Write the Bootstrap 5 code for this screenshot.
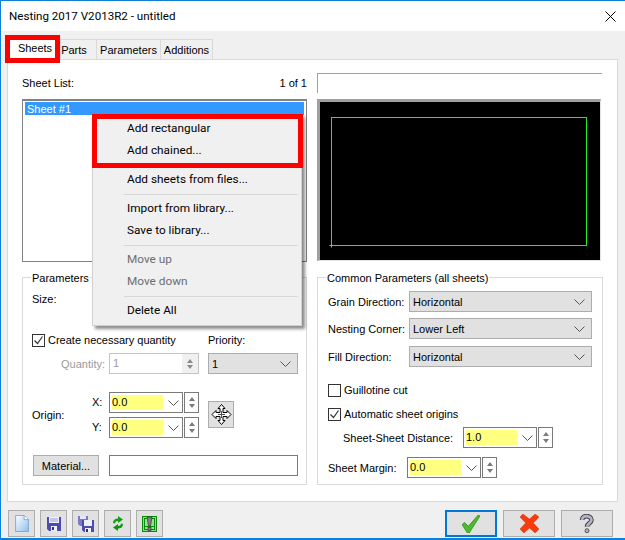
<!DOCTYPE html>
<html lang="en">
<head>
    <meta charset="UTF-8">
    <title>Nesting 2017 V2013R2 - untitled</title>
    <link href="https://cdn.jsdelivr.net/npm/bootstrap@5.3.3/dist/css/bootstrap.min.css" rel="stylesheet">
    <style>
        html, body { margin: 0; background: #fff; overflow: hidden; }
        body { font-family: "Liberation Sans", Arial, sans-serif; font-size: 11px; line-height: 16px; color: #000; }

        .dlg { position: relative; width: 625px; height: 540px; background: #f0f0f0; border-top: 1px solid #0f80d8; border-left: 1px solid #0f80d8; border-bottom: 2px solid #0f80d8; }
        .dlg-title { height: 30px; background: #fff; padding-left: 8px; font-family: Roboto, sans-serif; font-size: 11.600px; }
        .dlg-close { margin-right: 9px; line-height: 0; }

        .tabs-row { height: 28px; padding: 7px 0 0 7px; border: 0; flex-wrap: nowrap; align-items: flex-end; }
        .tabs-row .nav-link { height: 20px; padding: 2px 0 0; border: 1px solid #d9d9d9; border-bottom: 0; margin: 0 0 0 -1px; border-radius: 0; background: #f0f0f0; color: #000; text-align: center; }
        .tab-sheets { width: 52px; margin-left: 1px !important; }
        .tab-sheets.active { height: 24px; background: #fff; border-color: #fff; padding-top: 4px; }
        .tab-parts { width: 37px; padding-right: 9px !important; }
        .tab-params { width: 65px; }
        .tab-adds { width: 53px; }
        .red-tab { position: absolute; left: 4px; top: 4px; width: 55px; height: 28px; border: 5px solid #f00; pointer-events: none; z-index: 3; }

        .main-panel { width: 611px; height: 443px; margin-left: 6px; background: #fff; border: 1px solid #d9d9d9; padding: 13px 14px 0; display: grid; grid-template-columns: 285px 286px; column-gap: 10px; grid-template-rows: 20px 169px 208px; }
        .list-head { height: 20px; }
        .name-field { width: 285px; height: 20px; border-top: 1px solid #a0a0a0; border-left: 1px solid #a0a0a0; }
        .sheet-list { margin-top: 6px; height: 163px; border: 1px solid #828282; border-top-width: 2px; padding: 1px 2px; background: #fff; }
        .sheet-sel { height: 13px; line-height: 14px; background: #39f; color: #fff; padding-left: 2px; }
        .preview { margin-top: 6px; width: 284px; height: 162px; background: #000; border-top: 3px solid #a0a0a0; border-left: 3px solid #a0a0a0; border-right: 1px solid #e3e3e3; border-bottom: 1px solid #e3e3e3; line-height: 0; }

        .group-box { position: relative; margin-top: 15px; height: 208px; border: 1px solid #d9d9d9; }
        .group-name { position: absolute; top: -8px; left: 8px; padding: 0 1px; background: #fff; white-space: nowrap; }

        .ctl-select.form-select { height: 21px; min-height: 0; padding: 0 0 0 3px; font-size: 11px; line-height: 18px; color: #000; background-color: #e1e1e1; background-image: url("data:image/svg+xml,%3csvg xmlns='http://www.w3.org/2000/svg' viewBox='0 0 11 6'%3e%3cpath d='M.5.5l5 5 5-5' fill='none' stroke='%23555'/%3e%3c/svg%3e"); background-position: right 6px center; background-size: 11px 6px; border: 1px solid #adadad; border-radius: 0; box-shadow: none; }
        .ctl-box { height: 21px; border: 1px solid #7a7a7a; background: #fff; }
        .combo-main { width: 74px; height: 21px; border: 1px solid #7a7a7a; background: #fff; padding: 2px; align-items: stretch; }
        .combo-val { width: 51px; height: 15px; line-height: 15px; background: #ffff80; }
        .combo-chev { margin-left: 5px; align-self: center; line-height: 0; }
        .spin-box { width: 15px; height: 21px; border: 1px solid #7a7a7a; background: #fff; margin-left: 1px; gap: 3px; }
        .spin-up { width: 0; height: 0; border: 3px solid transparent; border-top: 0; border-bottom: 4px solid #7a7a7a; }
        .spin-dn { width: 0; height: 0; border: 3px solid transparent; border-bottom: 0; border-top: 4px solid #7a7a7a; }

        .ctl-check.form-check-input { width: 13px; height: 13px; margin: 0 3px 0 0; border: 1px solid #333; border-radius: 0; background-color: #fff; box-shadow: none; opacity: 1; flex: none; }
        .ctl-check.form-check-input:checked { background-color: #fff; border-color: #333; background-size: 11px 11px; background-image: url("data:image/svg+xml,%3csvg xmlns='http://www.w3.org/2000/svg' viewBox='0 0 11 11'%3e%3cpath d='M1.5 5.5l3 3 5-7' fill='none' stroke='%23333' stroke-width='1.2'/%3e%3c/svg%3e"); }

        .left-body { padding: 13px 8px 0 9px; }
        .row-size { height: 16px; }
        .row-create { margin-top: 25px; height: 16px; }
        .row-qty { margin-top: 5px; height: 21px; }
        .lbl-off { color: #9a9a9a; }
        .qty-label { width: 77px; text-align: right; padding-right: 4px; }
        .qty-box { width: 90px; height: 21px; border: 1px solid #c4c4c4; padding-left: 3px; color: #9a9a9a; line-height: 19px; }
        .qty-spin { width: 16px; background: #f0f0f0; height: 100%; gap: 2px; }
        .qty-spin .spin-up { border-bottom-color: #8a8a8a; }
        .qty-spin .spin-dn { border-top-color: #8a8a8a; }
        .col-prio { width: 90px; }
        .row-qty .col-prio { margin-left: 9px; }
        .row-origin { margin-top: 18px; height: 46px; }
        .origin-label { width: 60px; padding-top: 15px; }
        .origin-axes { width: 17px; }
        .axis-row { height: 21px; line-height: 20px; }
        .axis-row + .axis-row { margin-top: 4px; }
        .pan-btn { width: 26px; height: 27px; padding: 0; margin: 9px 0 0 9px; background: #e1e1e1; border: 1px solid #adadad; border-radius: 0; line-height: 0; }
        .row-mat { margin-top: 17px; height: 21px; padding-left: 1px; }
        .mat-btn { width: 66px; height: 21px; padding: 0; font-size: 11px; line-height: 18px; color: #000; background: #e1e1e1; border: 1px solid #adadad; border-radius: 0; margin-right: 10px; }
        .mat-box { width: 189px; height: 21px; }

        .right-body { padding: 13px 10px 0 10px; }
        .row-opt { height: 21px; }
        .row-opt + .row-opt { margin-top: 6px; }
        .row-opt + .row-opt + .row-opt { margin-top: 7px; }
        .opt-label { width: 81px; white-space: nowrap; }
        .opt-select { width: 183px; }
        .row-guil { margin-top: 15px; height: 16px; }
        .row-auto { margin-top: 8px; height: 16px; }
        .row-dist { margin-top: 5px; padding-left: 15px; height: 21px; }
        .dist-label { width: 120px; }
        .row-margin { margin-top: 9px; height: 21px; }
        .margin-label { width: 79px; }

        .foot { padding: 8px 12px 0 7px; }
        .tool-row { column-gap: 5px; }
        .act-row { column-gap: 6px; }
        .tool-btn { width: 27px; height: 27px; padding: 0; background: #e1e1e1; border: 1px solid #adadad; border-radius: 0; line-height: 0; }
        .act-btn { width: 52px; height: 27px; padding: 0; background: #e1e1e1; border: 1px solid #adadad; border-radius: 0; line-height: 0; }
        .act-btn.is-default { border: 2px solid #0078d7; }

        .ctx-menu.dropdown-menu { top: 113px; left: 91px; width: 210px; min-width: 0; padding: 3px 2px; background: #f0f0f0; border: 1px solid #d0d0d0; border-radius: 0; box-shadow: 3px 3px 3px rgba(0,0,0,.45); z-index: 5; }
        .ctx-menu .dropdown-item { height: 22px; line-height: 21px; padding: 0 0 0 32px; color: #000; font-family: Roboto, sans-serif; font-size: 11.800px; }
        .ctx-menu .dropdown-item.disabled { color: #6d6d6d; }
        .ctx-menu .dropdown-divider { height: 1px; margin: 3px 1px 3px 29px; border-top: 1px solid #d7d7d7; opacity: 1; }
        .red-menu { position: absolute; top: 113px; left: 91px; width: 211px; height: 54px; border: 5px solid #f00; z-index: 6; pointer-events: none; }
    </style>
</head>
<body>
<div class="dlg">
    <div class="dlg-title d-flex align-items-center justify-content-between">
        <span>Nesting 2017 V2013R2 - untitled</span>
        <span class="dlg-close"><svg width="11" height="11" viewBox="0 0 11 11"><path d="M.5.500l10 10M10.500.500l-10 10" stroke="#000" fill="none"/></svg></span>
    </div>

    <ul class="nav nav-tabs tabs-row position-relative">
        <li class="nav-item"><a class="nav-link active tab-sheets" href="#">Sheets</a></li>
        <li class="nav-item"><a class="nav-link tab-parts" href="#">Parts</a></li>
        <li class="nav-item"><a class="nav-link tab-params" href="#">Parameters</a></li>
        <li class="nav-item"><a class="nav-link tab-adds" href="#">Additions</a></li>
        <li class="red-tab"></li>
    </ul>

    <div class="main-panel">
        <div class="list-head d-flex justify-content-between align-items-center">
            <span>Sheet List:</span><span>1 of 1</span>
        </div>
        <div class="name-field"></div>

        <div class="sheet-list"><div class="sheet-sel">Sheet #1</div></div>
        <div class="preview">
            <svg width="280" height="158" viewBox="0 0 280 158">
                <rect x="11.500" y="15.500" width="255" height="128" fill="none" stroke="#22ee22"/>
                <path d="M9.500 143.500h4M11.500 141.500v4" stroke="#22ddff" fill="none"/>
            </svg>
        </div>

        <div class="group-box">
            <span class="group-name">Parameters</span>
            <div class="left-body">
                <div class="row-size">Size:</div>
                <div class="row-create d-flex justify-content-between">
                    <label class="d-flex align-items-center"><input class="form-check-input ctl-check" type="checkbox" checked>Create necessary quantity</label>
                    <span class="col-prio">Priority:</span>
                </div>
                <div class="row-qty d-flex align-items-center">
                    <span class="qty-label lbl-off">Quantity:</span>
                    <div class="qty-box d-flex justify-content-between"><span>1</span>
                        <span class="qty-spin d-flex flex-column align-items-center justify-content-center"><i class="spin-up"></i><i class="spin-dn"></i></span>
                    </div>
                    <select class="form-select ctl-select col-prio"><option>1</option></select>
                </div>
                <div class="row-origin d-flex">
                    <div class="origin-label">Origin:</div>
                    <div>
                        <div class="axis-row d-flex">
                            <span class="origin-axes">X:</span>
                            <div class="combo-main d-flex"><span class="combo-val">0.0</span><span class="combo-chev"><svg width="11" height="6" viewBox="0 0 11 6"><path d="M.5.500l5 5 5-5" fill="none" stroke="#555"/></svg></span></div>
                            <div class="spin-box d-flex flex-column align-items-center justify-content-center"><i class="spin-up"></i><i class="spin-dn"></i></div>
                        </div>
                        <div class="axis-row d-flex">
                            <span class="origin-axes">Y:</span>
                            <div class="combo-main d-flex"><span class="combo-val">0.0</span><span class="combo-chev"><svg width="11" height="6" viewBox="0 0 11 6"><path d="M.5.500l5 5 5-5" fill="none" stroke="#555"/></svg></span></div>
                            <div class="spin-box d-flex flex-column align-items-center justify-content-center"><i class="spin-up"></i><i class="spin-dn"></i></div>
                        </div>
                    </div>
                    <button class="btn pan-btn" type="button">
                        <svg width="21" height="21" viewBox="0 0 21 21"><path d="M10.500.500l3.500 4h-2v4h4v-2l4 4-4 4v-2h-4v4h2l-3.500 4-3.500-4h2v-4h-4v2l-4-4 4-4v2h4v-4h-2z" fill="#fff" stroke="#000" stroke-linejoin="round"/><path d="M7 10.500h7M10.500 7v7" stroke="#555" fill="none"/></svg>
                    </button>
                </div>
                <div class="row-mat d-flex">
                    <button class="btn mat-btn" type="button">Material...</button>
                    <div class="ctl-box mat-box"></div>
                </div>
            </div>
        </div>

        <div class="group-box">
            <span class="group-name">Common Parameters (all sheets)</span>
            <div class="right-body">
                <div class="row-opt d-flex align-items-center">
                    <span class="opt-label">Grain Direction:</span>
                    <select class="form-select ctl-select opt-select"><option>Horizontal</option></select>
                </div>
                <div class="row-opt d-flex align-items-center">
                    <span class="opt-label">Nesting Corner:</span>
                    <select class="form-select ctl-select opt-select"><option>Lower Left</option></select>
                </div>
                <div class="row-opt d-flex align-items-center">
                    <span class="opt-label">Fill Direction:</span>
                    <select class="form-select ctl-select opt-select"><option>Horizontal</option></select>
                </div>
                <label class="row-guil d-flex align-items-center"><input class="form-check-input ctl-check" type="checkbox">Guillotine cut</label>
                <label class="row-auto d-flex align-items-center"><input class="form-check-input ctl-check" type="checkbox" checked>Automatic sheet origins</label>
                <div class="row-dist d-flex align-items-center">
                    <span class="dist-label">Sheet-Sheet Distance:</span>
                    <div class="combo-main d-flex"><span class="combo-val">1.0</span><span class="combo-chev"><svg width="11" height="6" viewBox="0 0 11 6"><path d="M.5.500l5 5 5-5" fill="none" stroke="#555"/></svg></span></div>
                    <div class="spin-box d-flex flex-column align-items-center justify-content-center"><i class="spin-up"></i><i class="spin-dn"></i></div>
                </div>
                <div class="row-margin d-flex align-items-center">
                    <span class="margin-label">Sheet Margin:</span>
                    <div class="combo-main d-flex"><span class="combo-val">0.0</span><span class="combo-chev"><svg width="11" height="6" viewBox="0 0 11 6"><path d="M.5.500l5 5 5-5" fill="none" stroke="#555"/></svg></span></div>
                    <div class="spin-box d-flex flex-column align-items-center justify-content-center"><i class="spin-up"></i><i class="spin-dn"></i></div>
                </div>
            </div>
        </div>
    </div>

    <div class="foot d-flex justify-content-between">
        <div class="d-flex tool-row">
            <button class="btn tool-btn" type="button">
                <svg width="14" height="17" viewBox="0 0 16 20"><defs><linearGradient id="gd" x1="0" y1="0" x2="1" y2="1"><stop offset="0" stop-color="#fff"/><stop offset="1" stop-color="#8fc0f0"/></linearGradient></defs><path d="M.5.500h10l5 5v14H.5z" fill="url(#gd)" stroke="#6f9fd0"/><path d="M10.500.500v5h5" fill="#fff" stroke="#6f9fd0"/></svg>
            </button>
            <button class="btn tool-btn" type="button">
                <svg width="14" height="15" viewBox="0 0 14 15"><path d="M0 1h14v14H2l-2-2z" fill="#4c4cae"/><rect x="2" y="1" width="10" height="6" fill="#f0f0f8"/><path d="M3 3h8M3 5h8" stroke="#9a9ad8"/><rect x="4" y="10" width="6" height="5" fill="#f0f0f8"/><rect x="5" y="11" width="2" height="3" fill="#30307a"/></svg>
            </button>
            <button class="btn tool-btn" type="button">
                <svg width="16" height="16" viewBox="0 0 16 16"><path d="M0 0h10v10H2l-2-2z" fill="#7a7ac8"/><rect x="2" y="0" width="6" height="3" fill="#e8e8f4"/><path d="M4 4h12v12H6l-2-2z" fill="#4c4cae"/><rect x="6" y="4" width="8" height="6" fill="#f0f0f8"/><rect x="7" y="12" width="6" height="4" fill="#f0f0f8"/><rect x="8" y="13" width="2" height="3" fill="#30307a"/></svg>
            </button>
            <button class="btn tool-btn" type="button">
                <svg width="12" height="15" viewBox="0 0 12 15"><path d="M1 7c0-3 2-4.500 5-4.500V0l5 3.500L6 7V5C4 5 3 6 3 7.500z" fill="#12a012"/><path d="M11 8c0 3-2 4.500-5 4.500V15l-5-3.500L6 8v2c2 0 3-1 3-2.500z" fill="#0f960f"/></svg>
            </button>
            <button class="btn tool-btn" type="button">
                <svg width="15" height="16" viewBox="0 0 15 16"><rect x=".5" y=".5" width="14" height="15" fill="#8cdc8c" stroke="#0a8a0a"/><rect x="2.500" y="2.500" width="10" height="11" fill="#9ae09a" stroke="#0a8a0a"/><path d="M2 10.500h11" stroke="#0a8a0a"/><path d="M5 1h5L8.500 10h-2z" fill="#808080" stroke="#333" stroke-width=".7"/><rect x="6" y="11.500" width="3" height="3" fill="#808080" stroke="#333" stroke-width=".7"/></svg>
            </button>
        </div>
        <div class="d-flex act-row">
            <button class="btn act-btn is-default" type="button">
                <svg width="18" height="18" viewBox="0 0 20 19" preserveAspectRatio="none"><path d="M0 10l3-2 4 4L18 0l2 1L8 19h-2z" fill="#4cbb2c" stroke="#2a8a1a" stroke-width=".8"/></svg>
            </button>
            <button class="btn act-btn" type="button">
                <svg width="19" height="19" viewBox="0 0 20 19" preserveAspectRatio="none"><path d="M3 0l7 5 6-5 4 3-6 6 6 6-4 4-6-5-6 5-4-4 6-6-6-6z" fill="#f63c0c" stroke="#d83000" stroke-width=".5"/></svg>
            </button>
            <button class="btn act-btn" type="button">
                <svg width="16" height="19" viewBox="0 0 18 21" preserveAspectRatio="none"><path d="M3.500 6.500c0-6 10.500-5 10.500 0 0 4-5 3.500-5 7.500" fill="none" stroke="#444" stroke-width="5.200"/><path d="M3.500 6.500c0-6 10.500-5 10.500 0 0 4-5 3.500-5 7.500" fill="none" stroke="#b4b4cc" stroke-width="3"/><circle cx="9" cy="18.500" r="2.200" fill="#b4b4cc" stroke="#444"/></svg>
            </button>
        </div>
    </div>

    <div class="dropdown-menu show ctx-menu">
        <a class="dropdown-item" href="#">Add rectangular</a>
        <a class="dropdown-item" href="#">Add chained...</a>
        <hr class="dropdown-divider">
        <a class="dropdown-item" href="#">Add sheets from files...</a>
        <hr class="dropdown-divider">
        <a class="dropdown-item" href="#">Import from library...</a>
        <a class="dropdown-item" href="#">Save to library...</a>
        <hr class="dropdown-divider">
        <a class="dropdown-item disabled" href="#">Move up</a>
        <a class="dropdown-item disabled" href="#">Move down</a>
        <hr class="dropdown-divider">
        <a class="dropdown-item" href="#">Delete All</a>
    </div>
    <div class="red-menu"></div>
</div>
<script src="https://cdn.jsdelivr.net/npm/bootstrap@5.3.3/dist/js/bootstrap.bundle.min.js"></script>
</body>
</html>
